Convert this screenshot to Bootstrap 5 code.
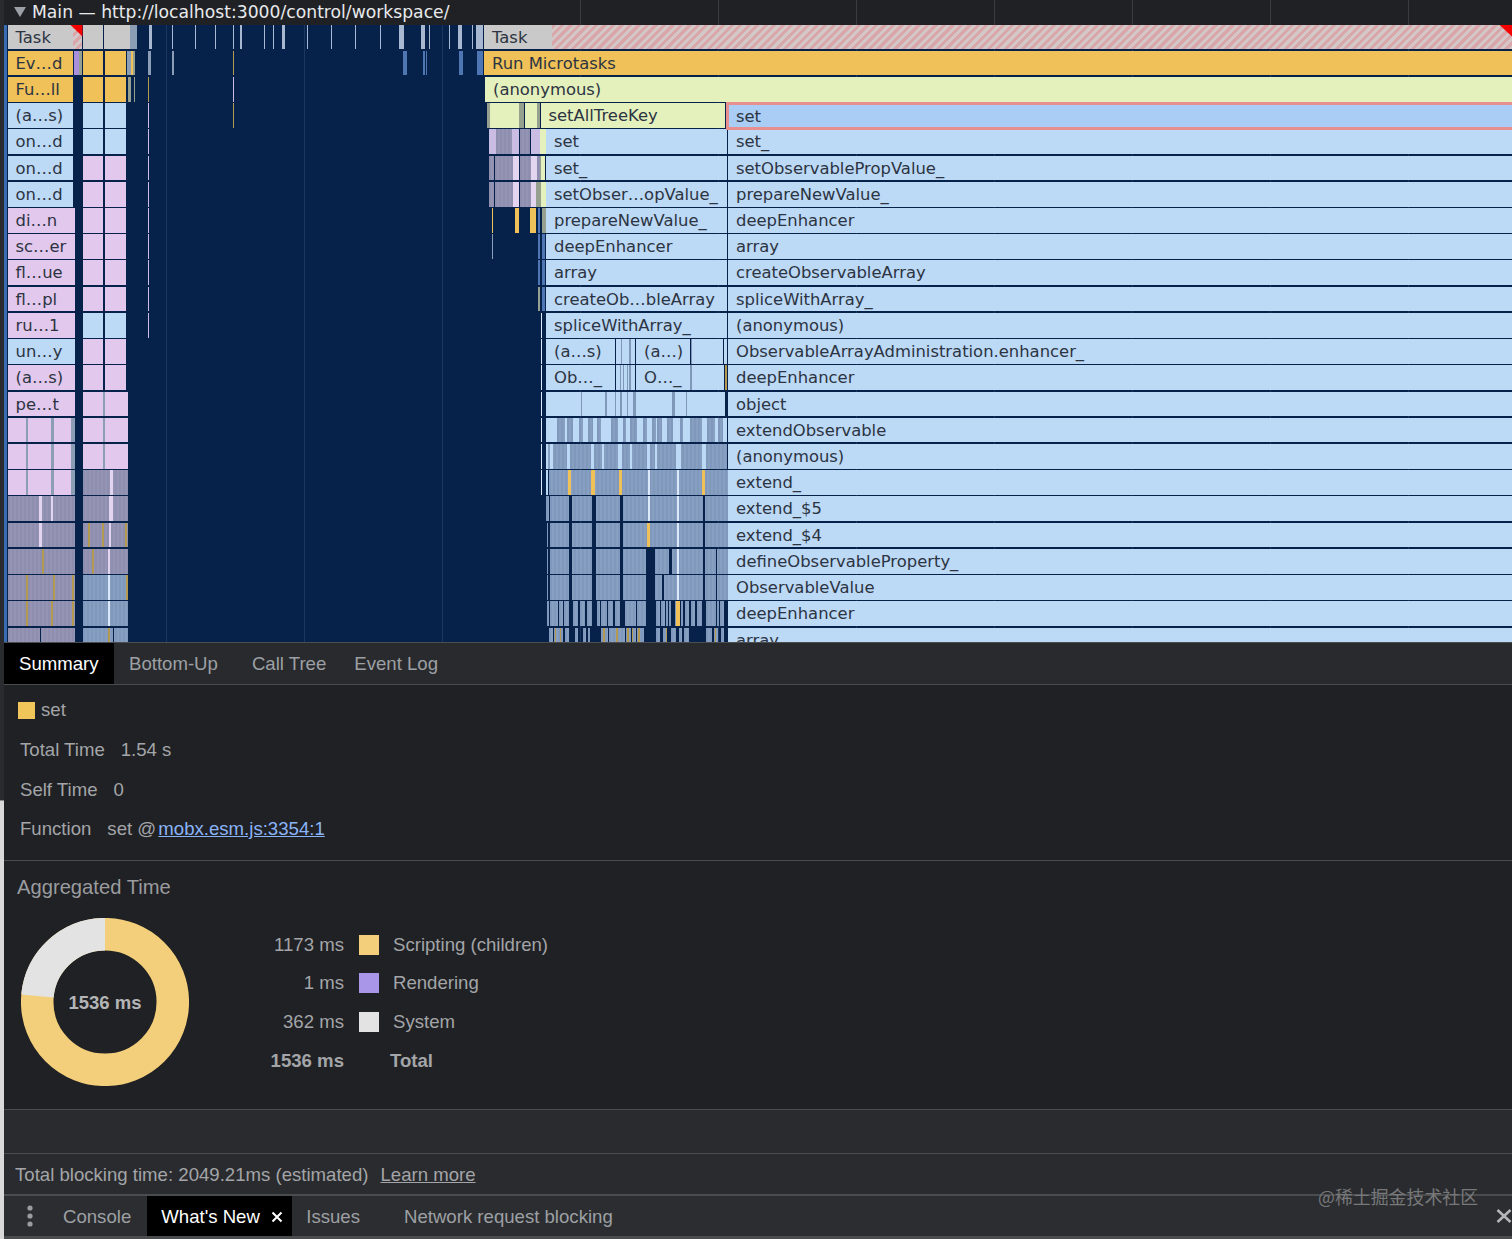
<!DOCTYPE html>
<html lang="en">
<head>
<meta charset="utf-8">
<title>Performance</title>
<link href="https://cdn.jsdelivr.net/npm/bootstrap@5.3.0/dist/css/bootstrap.min.css" rel="stylesheet">
<style>
html,body{margin:0;height:1239px;overflow:hidden;background:#202124}
.shell{height:1239px;width:1512px;position:relative}
.edge{width:4px;flex:none;background:linear-gradient(#2a2b2e 0 800px,#8a8a8a 800px 801px,#d9d9d9 801px)}
.pane{width:1508px;flex:none;font-family:"Liberation Sans",Arial,sans-serif;color:#a3a5a8;font-size:18.6px}
.tracktop{height:24.5px;background:#202124;position:relative;overflow:hidden;color:#e8eaed;font-family:"DejaVu Sans",sans-serif;font-size:17.2px;line-height:22px;white-space:nowrap}
.tracktop svg{margin:0 6px 0 10px;flex:none}
.flame{height:617.5px;background:#06224a;position:relative;overflow:hidden;border-left:3px solid #3a6cb4;margin:0}
.gridline{position:absolute;top:0;bottom:0;width:1px;background:#1b3760}
.topline{position:absolute;top:0;bottom:0;width:1px;background:#3a3b3e}
.frow{height:26.22px;position:relative}
.fb{position:absolute;top:0;height:24.7px;overflow:hidden;white-space:nowrap;font-family:"DejaVu Sans",sans-serif;font-size:16.4px;line-height:26.8px;color:#2c3442;padding-left:8px}
.cB{background:#bcd9f6}.cP{background:#e2c8ec}.cY{background:#efc158}.cG{background:#e4f1bd}.cT{background:#c9c9c9}
.cS{background:#a9cdf4;box-shadow:inset 0 0 0 3px #e88f8f;top:-1.3px;height:28px;line-height:29px;padding-left:10.5px;z-index:1}
.cH{background:repeating-linear-gradient(135deg,#d9a7a9 0 3px,#d3c7c8 3px 6px)}
.cR{background:#f40000;clip-path:polygon(0 0,100% 0,100% 100%);height:12px}
.cSP{background:repeating-linear-gradient(90deg,#8e8eae 0 2px,#9594b4 2px 4px)}
.cSB{background:repeating-linear-gradient(90deg,#7f98bb 0 2px,#87a0c2 2px 4px)}
.cGy{background:#8c9db6}.cGn{background:#96a08e}.cO{background:#b49a50}.cL{background:#a8b8d0}.cPu{background:#a98fdc}.cD{background:#06224a}.cV{background:#c9bde3}.cBl{background:#4d76b3}.cLb{background:#dbe9fa}
.cGb{background:#7f98ba}.cW{background:#e3d5f0}
.hairline{background:#4b4c4e;height:1px}
.ttabs{height:40.5px;background:#292a2d}
.ttabs .nav-link,.dtabs .nav-link{color:#9da0a4;padding:1px 0 0;height:100%;display:flex;align-items:center}
.ttabs .nav-link.on,.dtabs .nav-link.on{background:#000;color:#fff}
.t1{width:110px;padding-left:15px!important}.t2{margin-left:15px}.t3{margin-left:34px}.t4{margin-left:28px}
.ttabs .nav,.dtabs .nav{height:100%;flex-wrap:nowrap}
.sumarea{background:#202124;height:176px;padding-top:6px;border-bottom:1px solid #4b4c4e}
.kv{height:39.6px;display:flex;align-items:center;padding-left:16px}
.kv span+span{margin-left:16px}
.headrow{padding-left:14px}
.swatch{width:17px;height:17px;background:#f0c55a;display:inline-block;margin-right:6px;flex:none}
.lnk{color:#8ab4f8;text-decoration:underline;margin-left:-3px}
.aggr{height:249px;background:#202124;padding:14px 0 0 13px;border-bottom:1px solid #4b4c4e}
.aggr h2{font-size:20.2px;line-height:24px;font-weight:400;margin:0 0 19px;color:#9a9c9f}
.ring{margin-left:4px;flex:none}
.legend{margin:7.7px 0 0 60px}
.lrow{height:38.7px;display:flex;align-items:center}
.lval{width:95px;text-align:right}
.lbox{width:20px;height:20px;margin:0 14px 0 15px;flex:none}
.ltotal{margin-left:46px}
.strip{height:44px;background:#2a2b2e;border-bottom:1px solid #4b4c4e}
.blocking{height:42.5px;background:#2a2b2e;border-bottom:2px solid #4b4c4e;padding:3px 0 0 11px;display:flex;align-items:center}
.blocking a{color:#a3a5a8;text-decoration:underline;margin-left:12px}
.dtabs{height:40px;background:#2c2d30;position:relative}
.dmenu{margin-left:21px;flex:none}
.d1{margin-left:28px}.d2{margin-left:16px;padding:1px 7px 0 14px!important;width:145px}.d3{margin-left:14px}.d4{margin-left:44px}
.dx{margin-left:11px}
.drawerx{position:absolute;right:0;top:12px}
.tail{height:3px;background:#4b4c4e}
.wmark{position:absolute;left:1318px;top:1184px;font-family:"Noto Sans CJK SC",sans-serif;font-size:17.9px;line-height:24px;color:#77787a;white-space:nowrap}
</style>
</head>
<body>
<div class="shell d-flex">
  <div class="edge"></div>
  <div class="pane d-flex flex-column">
    <div class="tracktop d-flex align-items-center" id="tt">
      <svg width="12" height="10" viewBox="0 0 12 10"><polygon points="0,0 12,0 6,10" fill="#9aa0a6"/></svg>
      <span>Main — http://localhost:3000/control/workspace/</span>
    </div>
    <div class="flame" id="flame"></div>
    <div class="hairline"></div>
    <div class="ttabs">
      <ul class="nav">
        <li class="nav-item"><a class="nav-link on t1">Summary</a></li>
        <li class="nav-item"><a class="nav-link t2">Bottom-Up</a></li>
        <li class="nav-item"><a class="nav-link t3">Call Tree</a></li>
        <li class="nav-item"><a class="nav-link t4">Event Log</a></li>
      </ul>
    </div>
    <div class="hairline"></div>
    <div class="sumarea">
      <div class="kv headrow"><span class="swatch"></span><span class="ms-0">set</span></div>
      <div class="kv"><span>Total Time</span><span>1.54 s</span></div>
      <div class="kv"><span>Self Time</span><span>0</span></div>
      <div class="kv"><span>Function</span><span>set @ <a class="lnk" href="#">mobx.esm.js:3354:1</a></span></div>
    </div>
    <div class="aggr">
      <h2>Aggregated Time</h2>
      <div class="d-flex">
        <svg class="ring" width="168" height="168" viewBox="0 0 168 168">
          <circle cx="84" cy="84" r="67.8" fill="none" stroke="#f3cf7c" stroke-width="32.5"/>
          <circle cx="84" cy="84" r="67.8" fill="none" stroke="#e3e3e3" stroke-width="32.5" pathLength="1536" stroke-dasharray="362 1174" stroke-dashoffset="362" transform="rotate(-90 84 84)"/>
          <text x="84" y="91" text-anchor="middle" font-family="Liberation Sans, Arial, sans-serif" font-size="18.5" font-weight="700" fill="#b4b5b7">1536 ms</text>
        </svg>
        <div class="legend">
          <div class="lrow"><span class="lval">1173 ms</span><span class="lbox" style="background:#f3cf7c"></span><span>Scripting (children)</span></div>
          <div class="lrow"><span class="lval">1 ms</span><span class="lbox" style="background:#a996e8"></span><span>Rendering</span></div>
          <div class="lrow"><span class="lval">362 ms</span><span class="lbox" style="background:#e3e3e3"></span><span>System</span></div>
          <div class="lrow fw-bold"><span class="lval">1536 ms</span><span class="ltotal">Total</span></div>
        </div>
      </div>
    </div>
    <div class="strip"></div>
    <div class="blocking"><span>Total blocking time: 2049.21ms (estimated)</span><a href="#">Learn more</a></div>
    <div class="dtabs d-flex align-items-center">
      <svg class="dmenu" width="10" height="24" viewBox="0 0 10 24"><circle cx="5" cy="4" r="2.6" fill="#9a9c9f"/><circle cx="5" cy="12" r="2.6" fill="#9a9c9f"/><circle cx="5" cy="20" r="2.6" fill="#9a9c9f"/></svg>
      <ul class="nav">
        <li class="nav-item"><a class="nav-link d1">Console</a></li>
        <li class="nav-item"><a class="nav-link on d2">What's New<svg class="dx" width="12" height="12" viewBox="0 0 12 12"><path d="M1.5 1.5l9 9M10.5 1.5l-9 9" stroke="#fff" stroke-width="2"/></svg></a></li>
        <li class="nav-item"><a class="nav-link d3">Issues</a></li>
        <li class="nav-item"><a class="nav-link d4">Network request blocking</a></li>
      </ul>
      <svg class="drawerx" width="16" height="16" viewBox="0 0 16 16"><path d="M1.5 2l13 12M14.5 2l-13 12" stroke="#b5b6b8" stroke-width="2.6"/></svg>
    </div>
    <div class="tail"></div>
  </div>
  <div class="wmark">@稀土掘金技术社区</div>
</div>
<script src="https://cdn.jsdelivr.net/npm/bootstrap@5.3.0/dist/js/bootstrap.bundle.min.js"></script>
<script>
(function(){
  var R=[];for(var i=0;i<24;i++)R.push([]);
  function add(r,a,b,c,t){R[r].push([a,b,c,t||''])}
  function many(r,c,list){list.forEach(function(p){add(r,p[0],p[1],c)})}

  /* left groups */
  var colA=['Ev…d','Fu…ll','(a…s)','on…d','on…d','on…d','di…n','sc…er','fl…ue','fl…pl','ru…1','un…y','(a…s)','pe…t'];
  var colACls=['cY','cY','cB','cB','cB','cB','cP','cP','cP','cP','cP','cB','cP','cP'];
  add(0,7.5,73,'cT','Task');add(0,73,82,'cH');add(0,70,82.5,'cR');
  add(0,83,103,'cT');add(0,104,127,'cT');add(0,127,130,'cT');add(0,130,137,'cGy');
  colA.forEach(function(t,i){add(i+1,7.5,i<6?73:75,colACls[i],t)});
  add(1,74,79,'cPu');add(1,79,82,'cGn');
  var b=['cY','cY','cB','cB','cP','cP','cP','cP','cP','cP','cB','cP','cP','cP'];
  b.forEach(function(c,i){var r=i+1;
    if(i==10){c='cB';add(r,83,103,c);add(r,105,126,c);return}
    if(i==11){c='cP'}
    add(r,83,103,c);add(r,105,r==14?128:126,c);if(r==14)add(r,103,105,'cGy')});
  add(1,127,131,'cGy');add(1,131,133,'cY');add(1,133,135,'cGn');
  add(2,128,131,'cGn');add(2,134,135,'cGn');
  for(var r=15;r<=17;r++){add(r,7.5,75,'cP');many(r,'cGy',[[26,28],[51,54],[71,75]])}
  add(15,83,103,'cP');add(15,105,128,'cP');add(15,103,105,'cGy');
  add(16,83,103,'cP');add(16,105,128,'cP');add(16,103,105,'cGy');
  add(17,83,128,'cSP');many(17,'cW',[[110,113]]);
  for(r=18;r<=23;r++){add(r,7.5,75,'cSP');add(r,83,128,r>=21?'cSB':'cSP')}
  many(18,'cW',[[39,42],[51,53],[109,113]]);
  many(19,'cW',[[39,42]]);many(19,'cO',[[88,90],[102,104],[125,127]]);many(19,'cW',[[109,111]]);
  many(20,'cO',[[42,44],[92,94]]);many(20,'cW',[[108,110]]);
  many(21,'cO',[[26,28],[53,55],[72,74],[126,128]]);many(21,'cLb',[[108,110]]);
  many(22,'cO',[[26,28],[51,53],[72,74]]);many(22,'cLb',[[108,110]]);
  many(23,'cD',[[40,41],[113,114]]);many(23,'cO',[[108,110]]);

  /* thin streaks */
  many(0,'cL',[[149,152],[172,173],[195,196],[215,216],[233,234],[240,242],[264,265],[273,274],[282,285],[307,308],[331,332],[355,356],[380,381],[399,404],[421,425],[429,430],[449,450],[458,462],[472,473],[476,483]]);
  many(1,'cGy',[[148,151],[172,174]]);many(1,'cO',[[233,234]]);many(1,'cBl',[[403,407],[423,425],[426,427],[459,463],[477,483]]);
  many(2,'cO',[[148,149]]);many(2,'cV',[[233,234]]);
  add(3,233,234,'cO');
  for(r=3;r<=11;r++)add(r,148,149,'cV');

  /* top of the long task */
  add(0,484,552,'cT','Task');add(0,552,1512,'cH');add(0,1499,1512,'cR');
  add(1,484,1512,'cY','Run Microtasks');add(2,485,1512,'cG','(anonymous)');

  /* row 3–6 */
  many(3,'cGn',[[487,490],[519,524],[537,540]]);many(3,'cG',[[490,519],[525,537]]);
  add(3,540.5,725,'cG','setAllTreeKey');add(3,725.5,1516,'cS','set');
  many(4,'cV',[[489,496],[512,519],[531,540]]);many(4,'cSP',[[496,512],[520,530]]);add(4,540,546,'cG');
  many(5,'cSP',[[489,494],[495,513],[520,531],[537,540]]);many(5,'cW',[[513,519],[531,537]]);add(5,541,545,'cG');add(5,540,541,'cGn');
  many(6,'cSP',[[489,494],[495,513],[520,531]]);many(6,'cW',[[513,519],[531,536]]);many(6,'cGn',[[536,541]]);add(6,541,546,'cG');
  add(7,492,493,'cY');many(7,'cY',[[515,519],[530,536]]);many(7,'cBl',[[538,540]]);many(7,'cGn',[[542,546]]);
  add(8,492,493,'cGy');
  for(r=8;r<=10;r++){add(r,538,540,r==10?'cGn':'cBl');add(r,542,545,'cBl')}
  for(r=11;r<=17;r++)add(r,541,542,'cLb');

  /* middle labels */
  var mid=['set','set_','setObser…opValue_','prepareNewValue_','deepEnhancer','array','createOb…bleArray','spliceWithArray_'];
  mid.forEach(function(t,i){add(i+4,546,727,'cB',t)});
  /* right labels */
  var right=['set_','setObservablePropValue_','prepareNewValue_','deepEnhancer','array','createObservableArray','spliceWithArray_','(anonymous)','ObservableArrayAdministration.enhancer_','deepEnhancer','object','extendObservable','(anonymous)','extend_','extend_$5','extend_$4','defineObservableProperty_','ObservableValue','deepEnhancer','array'];
  right.forEach(function(t,i){add(i+4,728,1512,'cB',t)});

  /* rows with split cells */
  add(12,546,615,'cB','(a…s)');add(12,616,635,'cB');many(12,'cGb',[[621,622],[629,631]]);add(12,636,690,'cB','(a…)');add(12,691,692,'cGb');add(12,692,723,'cB');add(12,724,727,'cB');
  add(13,546,615,'cB','Ob…_');add(13,616,635,'cB');many(13,'cGb',[[620,621],[623,624],[627,628],[629,631]]);add(13,636,690,'cB','O…_');add(13,690,692,'cGb');add(13,692,724,'cB');add(13,725,727,'cO');
  add(14,546,725,'cB');
  many(14,'cGb',[[581,582],[605,607],[615,616],[620,622],[627,628],[633,636],[672,675],[686,687]]);

  /* row 15 */
  add(15,546,727,'cB');
  many(15,'cSB',[[557,565],[567,573],[579,583],[588,593],[597,601],[611,618],[623,626],[630,637],[643,647],[652,656],[657,662],[667,673],[680,683],[690,702],[707,715],[718,723]]);
  /* row 16 */
  add(16,546,727,'cSB');
  many(16,'cB',[[546,548],[550,553],[567,570],[591,594],[602,604],[618,622],[630,632],[647,650],[655,657],[676,681],[702,706]]);
  /* row 17–21 */
  add(17,546,548,'cB');add(17,549,728,'cSB');
  many(17,'cY',[[568,571],[591,595],[619,622],[702,705]]);many(17,'cLb',[[648,650],[677,679]]);
  add(18,546,549,'cSB');add(18,549.5,728,'cSB');many(18,'cD',[[569,572],[592,596],[620,623],[703,705]]);many(18,'cLb',[[648,650],[677,679]]);
  add(19,547,548,'cSB');add(19,550,728,'cSB');many(19,'cD',[[569,572],[592,596],[620,623],[703,705]]);many(19,'cY',[[647,650]]);many(19,'cLb',[[677,679]]);
  add(20,547,548,'cSB');add(20,550,728,'cSB');many(20,'cD',[[569,572],[592,596],[620,623],[646,655],[669,672],[703,705],[716,717]]);many(20,'cLb',[[677,679]]);
  add(21,547,548,'cSB');add(21,550,728,'cSB');many(21,'cD',[[569,572],[592,596],[620,623],[646,655],[662,664],[703,705],[716,717]]);many(21,'cLb',[[677,679]]);
  [[547,549],[550,558],[559,563],[564,569],[573,578],[580,585],[587,592],[597,600],[601,607],[608,613],[615,620],[625,636],[637,646],[656,660],[661,665],[666,668],[669,671],[675,679],[681,683],[685,689],[691,695],[697,702],[706,716],[717,719],[720,724]].forEach(function(p){add(22,p[0],p[1],'cSB')});
  add(22,676,680,'cY');
  [[549,553],[554,560],[561,563],[565,569],[575,578],[583,586],[588,590],[601,608],[609,616],[617,625],[626,631],[633,636],[637,644],[656,660],[663,667],[671,676],[679,682],[684,689],[706,712],[714,718],[721,724]].forEach(function(p){add(23,p[0],p[1],'cSB')});
  many(23,'cO',[[555,556],[560,561],[603,605],[616,618],[627,629],[632,633],[638,640],[666,667],[715,716]]);

  var fl=document.getElementById('flame');
  var grid=[166,304,442,580,718,856,994,1132,1270,1408];
  grid.forEach(function(x){
    var g=document.createElement('div');g.className='gridline';g.style.left=(x-7)+'px';fl.appendChild(g);
    if(x>450){var t=document.createElement('div');t.className='topline';t.style.left=(x-4)+'px';document.getElementById('tt').appendChild(t);}
  });
  R.forEach(function(list){
    var row=document.createElement('div');row.className='frow';
    list.forEach(function(s){
      var d=document.createElement('div');d.className='fb '+s[2];
      d.style.left=(s[0]-7)+'px';d.style.width=(s[1]-s[0])+'px';
      if(s[3])d.textContent=s[3];else d.style.padding='0';
      row.appendChild(d);
    });
    fl.appendChild(row);
  });
})();
</script>
</body>
</html>
